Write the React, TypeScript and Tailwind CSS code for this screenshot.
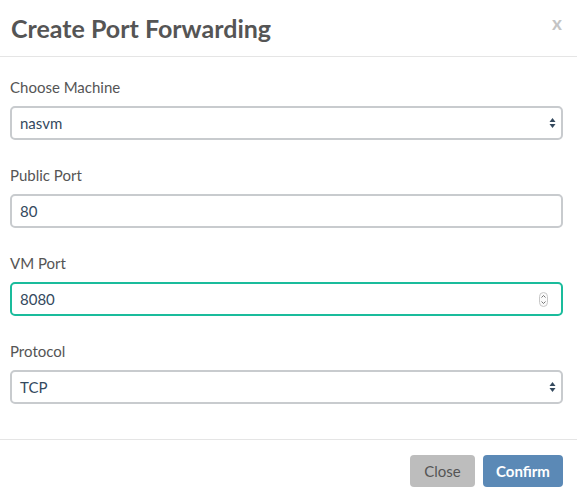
import React from "react";

const SelectArrows = () => (
  <svg width="7" height="12" viewBox="0 0 7 12" className="shrink-0">
    <path d="M3.5 1 L6.5 5 L0.5 5 Z" fill="#34495e" />
    <path d="M3.5 11 L6.5 7 L0.5 7 Z" fill="#34495e" />
  </svg>
);

const Spinner = () => (
  <svg width="9" height="15" viewBox="0 0 9 15" className="shrink-0">
    <rect x="0.5" y="0.5" width="8" height="14" rx="4" fill="#fafafa" stroke="#c8c8c8" />
    <path d="M2.5 5.5 L4.5 3.5 L6.5 5.5" fill="none" stroke="#666" strokeWidth="0.9" />
    <path d="M2.5 9.5 L4.5 11.5 L6.5 9.5" fill="none" stroke="#666" strokeWidth="0.9" />
  </svg>
);

function Field({
  label,
  value,
  kind,
  focused,
}: {
  label: string;
  value: string;
  kind: "select" | "text" | "number";
  focused?: boolean;
}) {
  return (
    <div className="flex flex-col">
      <div className="h-[20px] leading-[20px] text-[15px] text-[#555]">{label}</div>
      <div
        className={
          "mt-[9px] h-[34px] rounded-[5px] border-2 flex items-center pl-[8px] pr-[5px] " +
          (focused ? "border-[#1abc9c]" : "border-[#c8cbce]")
        }
      >
        <span className="flex-1 text-[15px] text-[#34495e]">{value}</span>
        {kind === "select" && <SelectArrows />}
        {kind === "number" && (
          <span className="mr-[8px] flex">
            <Spinner />
          </span>
        )}
      </div>
    </div>
  );
}

export default function App() {
  return (
    <div
      className="w-[577px] h-[499px] bg-white flex flex-col overflow-hidden"
      style={{ fontFamily: "Lato, 'Open Sans', sans-serif" }}
    >
      <div className="h-[57px] shrink-0 border-b border-[#e5e5e5] flex items-center pl-[11px] pr-[15px]">
        <div className="flex-1 text-[25px] font-bold text-[#555] leading-none pt-[1px]">
          Create Port Forwarding
        </div>
        <div className="text-[19px] font-bold text-[#c4c4c4] leading-none mb-[12px]">x</div>
      </div>
      <div className="pl-[10px] pr-[14px] pt-[20px] flex flex-col gap-[25px] h-[383px] shrink-0 border-b border-[#e5e5e5]">
        <Field label="Choose Machine" value="nasvm" kind="select" />
        <Field label="Public Port" value="80" kind="text" />
        <Field label="VM Port" value="8080" kind="number" focused />
        <Field label="Protocol" value="TCP" kind="select" />
      </div>
      <div className="flex justify-end gap-[8px] pr-[14px] pt-[15px]">
        <button className="w-[65px] h-[32px] rounded-[4px] bg-[#bdbdbd] text-[#555] text-[15px]">
          Close
        </button>
        <button className="w-[80px] h-[32px] rounded-[4px] bg-[#5b89b6] text-white text-[15px] font-bold">
          Confirm
        </button>
      </div>
    </div>
  );
}
